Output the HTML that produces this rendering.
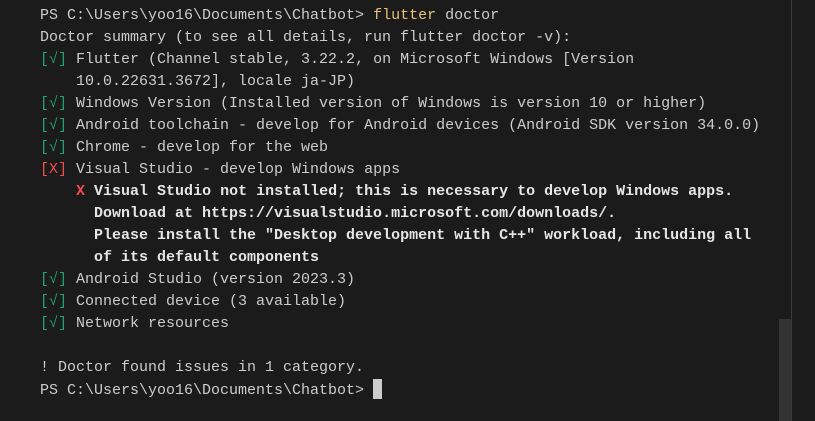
<!DOCTYPE html>
<html><head><style>
html,body{margin:0;padding:0;background:#1b1b1b;width:815px;height:421px;overflow:hidden}
pre{position:absolute;left:40px;top:5px;margin:0;font-family:"Liberation Mono",monospace;font-size:15px;line-height:22px;color:#cccccc;white-space:pre}
.g{color:#23a06d}.r{color:#f14c4c}.y{color:#e5c07b}b{color:#e5e5e5}
.div{position:absolute;left:791px;top:0;width:1px;height:421px;background:#3a3a3a}
.sb{position:absolute;left:779px;top:319px;width:12px;height:102px;background:#333}
.cur{display:inline-block;width:9px;height:20px;background:#ccc;vertical-align:-5px}
</style></head><body>
<pre>PS C:\Users\yoo16\Documents\Chatbot&gt; <span class="y">flutter</span> doctor
Doctor summary (to see all details, run flutter doctor -v):
<span class="g">[√]</span> Flutter (Channel stable, 3.22.2, on Microsoft Windows [Version
    10.0.22631.3672], locale ja-JP)
<span class="g">[√]</span> Windows Version (Installed version of Windows is version 10 or higher)
<span class="g">[√]</span> Android toolchain - develop for Android devices (Android SDK version 34.0.0)
<span class="g">[√]</span> Chrome - develop for the web
<span class="r">[X]</span> Visual Studio - develop Windows apps
    <b class="r">X</b> <b>Visual Studio not installed; this is necessary to develop Windows apps.</b>
      <b>Download at https://visualstudio.microsoft.com/downloads/.</b>
      <b>Please install the "Desktop development with C++" workload, including all</b>
      <b>of its default components</b>
<span class="g">[√]</span> Android Studio (version 2023.3)
<span class="g">[√]</span> Connected device (3 available)
<span class="g">[√]</span> Network resources

! Doctor found issues in 1 category.
PS C:\Users\yoo16\Documents\Chatbot&gt; <span class="cur"></span></pre>
<div class="div"></div><div class="sb"></div>
</body></html>
